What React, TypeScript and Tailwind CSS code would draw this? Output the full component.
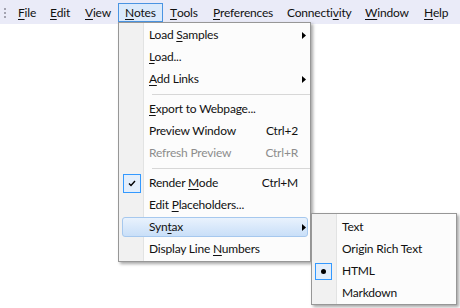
import React from 'react';

type Item =
  | { kind: 'sep' }
  | {
      kind: 'item';
      label: React.ReactNode;
      shortcut?: string;
      sub?: boolean;
      disabled?: boolean;
      checked?: boolean;
      active?: boolean;
    };

const U = ({ children }: { children: React.ReactNode }) => (
  <span className="underline underline-offset-[2px] decoration-[1px]">{children}</span>
);

const menuItems: Item[] = [
  { kind: 'item', label: <>Load <U>S</U>amples</>, sub: true },
  { kind: 'item', label: <><U>L</U>oad...</> },
  { kind: 'item', label: <><U>A</U>dd Links</>, sub: true },
  { kind: 'sep' },
  { kind: 'item', label: <><U>E</U>xport to Webpage...</> },
  { kind: 'item', label: 'Preview Window', shortcut: 'Ctrl+2' },
  { kind: 'item', label: 'Refresh Preview', shortcut: 'Ctrl+R', disabled: true },
  { kind: 'sep' },
  { kind: 'item', label: <>Render <U>M</U>ode</>, shortcut: 'Ctrl+M', checked: true },
  { kind: 'item', label: <>Edit <U>P</U>laceholders...</> },
  { kind: 'item', label: <>Syn<U>t</U>ax</>, sub: true, active: true },
  { kind: 'item', label: <>Display Line <U>N</U>umbers</> },
];

const barItems: { label: React.ReactNode; w: string; open?: boolean }[] = [
  { label: <><U>F</U>ile</>, w: 'w-[32px]' },
  { label: <><U>E</U>dit</>, w: 'w-[35px]' },
  { label: <><U>V</U>iew</>, w: 'w-[40px]' },
  { label: <><U>N</U>otes</>, w: 'w-[45px]', open: true },
  { label: <><U>T</U>ools</>, w: 'w-[43px]' },
  { label: <><U>P</U>references</>, w: 'w-[74px]' },
  { label: <>Connecti<U>v</U>ity</>, w: 'w-[78px]' },
  { label: <><U>W</U>indow</>, w: 'w-[59px]' },
  { label: <><U>H</U>elp</>, w: 'w-[33px]' },
];

const Arrow = () => (
  <svg width="4" height="7" viewBox="0 0 4 7" className="block">
    <path d="M0 0L4 3.5L0 7Z" fill="#000" />
  </svg>
);

export default function App() {
  return (
    <div className="relative w-[460px] h-[308px] bg-white overflow-hidden font-['Segoe_UI','Lato',sans-serif] text-[12px] tracking-[-0.2px] text-[#111]">
      {/* Menu bar */}
      <div className="flex h-[24px] bg-[#eaebf8] pl-[4px] pt-[3px]">
        <div className="w-[7px] flex flex-col gap-[2px] pt-[5px]">
          <div className="w-[2px] h-[2px] bg-[#a3a3b0]" />
          <div className="w-[2px] h-[2px] bg-[#a3a3b0]" />
          <div className="w-[2px] h-[2px] bg-[#a3a3b0]" />
        </div>
        {barItems.map((b, i) => (
          <div
            key={i}
            className={`${b.w} h-[19px] flex items-center ${
              b.open ? 'border border-[#4a94e2] bg-[#dbeafb] pl-[6px]' : 'pl-[7px]'
            }`}
          >
            {b.label}
          </div>
        ))}
      </div>

      {/* Notes dropdown */}
      <div className="absolute left-[118px] top-[22px] w-[193px] border border-[#979797] bg-[#fcfcfc] py-px shadow-[2px_2px_3px_rgba(0,0,0,0.35)]">
        <div className="absolute left-0 top-0 bottom-0 w-[25px] bg-[#f1f1f1] border-r border-[#e2e3e3]" />
        {menuItems.map((it, i) =>
          it.kind === 'sep' ? (
            <div key={i} className="relative h-[8px] pt-[4px] pl-[33px]">
              <div className="h-px bg-[#d7d7d7]" />
            </div>
          ) : (
            <div key={i} className="relative h-[22px] py-px ml-[3px] mr-[2px]">
              <div
                className={`relative h-[20px] flex items-center pl-[26px] border rounded-[3px] ${
                  it.active
                    ? 'border-[#a6c8ee] bg-gradient-to-b from-[#e9f2fd] to-[#c9dff8]'
                    : 'border-transparent'
                } ${it.disabled ? 'text-[#8d8d8d]' : ''}`}
              >
                {it.checked && (
                  <div className="absolute left-0 top-[0px] w-[18px] h-[19px] border border-[#3399ff] bg-[#e3eefb] flex items-center justify-center">
                    <svg width="8" height="7" viewBox="0 0 8 7">
                      <path d="M1 3.5L3 5.5L7 1" stroke="#000" strokeWidth="1.4" fill="none" />
                    </svg>
                  </div>
                )}
                <span className="flex-1 leading-none">{it.label}</span>
                {it.shortcut && <span className="leading-none">{it.shortcut}</span>}
                <span className="w-[9px] flex justify-end pr-px">{it.sub && <Arrow />}</span>
              </div>
            </div>
          )
        )}
      </div>

      {/* Syntax submenu */}
      <div className="absolute left-[311px] top-[213px] w-[146px] border border-[#979797] bg-[#fcfcfc] pt-[2px] shadow-[2px_2px_3px_rgba(0,0,0,0.35)]">
        <div className="absolute left-0 top-0 bottom-0 w-[25px] bg-[#f1f1f1] border-r border-[#e2e3e3]" />
        {['Text', 'Origin Rich Text', 'HTML', 'Markdown'].map((t) => (
          <div key={t} className="relative h-[22px] flex items-center pl-[30px]">
            {t === 'HTML' && (
              <div className="absolute left-[3px] top-[3px] w-[17px] h-[17px] border border-[#3399ff] bg-[#e3eefb] flex items-center justify-center">
                <div className="w-[5px] h-[5px] rounded-full bg-black" />
              </div>
            )}
            <span className="leading-none">{t}</span>
          </div>
        ))}
      </div>
    </div>
  );
}
